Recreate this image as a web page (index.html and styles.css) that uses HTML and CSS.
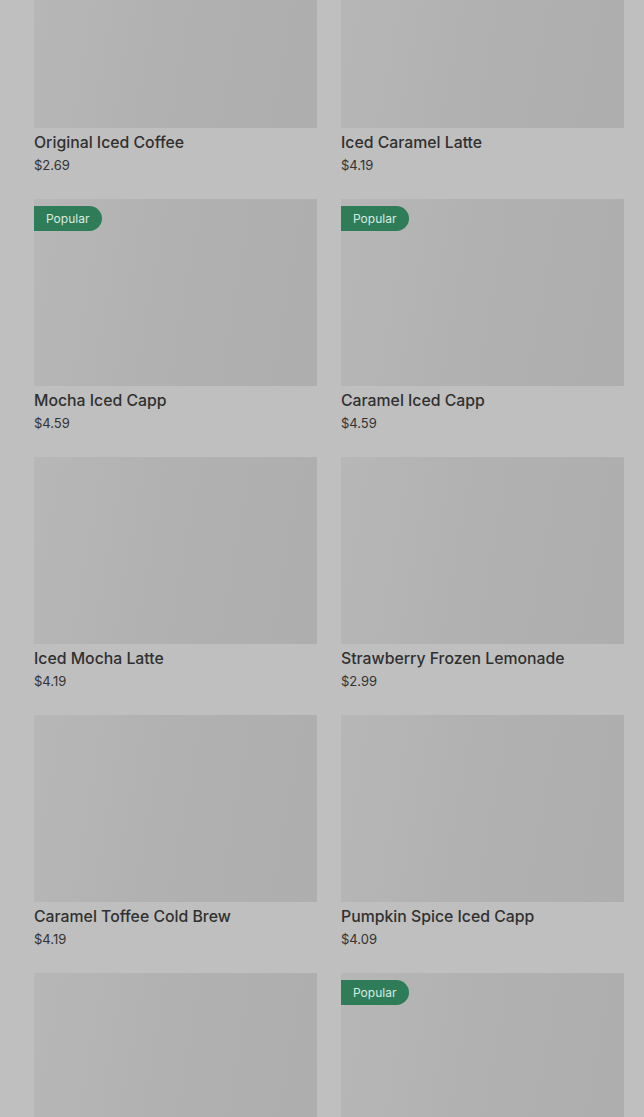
FILE: index.html
```html
<!DOCTYPE html>
<html lang="en">
<head>
  <meta charset="UTF-8">
  <meta name="viewport" content="width=device-width, initial-scale=1.0">
  <title>Menu - Cold Drinks</title>
  <link rel="stylesheet" href="styles.css">
</head>
<body>
  <!-- Product grid (page is dimmed behind an overlay) -->
  <div class="product-grid">
    <div class="product-card">
      <div class="product-image"></div>
      <div class="product-name">Original Iced Coffee</div>
      <div class="product-price">$2.69</div>
    </div>
    <div class="product-card">
      <div class="product-image"></div>
      <div class="product-name">Iced Caramel Latte</div>
      <div class="product-price">$4.19</div>
    </div>

    <div class="product-card">
      <div class="product-image"><span class="badge">Popular</span></div>
      <div class="product-name">Mocha Iced Capp</div>
      <div class="product-price">$4.59</div>
    </div>
    <div class="product-card">
      <div class="product-image"><span class="badge">Popular</span></div>
      <div class="product-name">Caramel Iced Capp</div>
      <div class="product-price">$4.59</div>
    </div>

    <div class="product-card">
      <div class="product-image"></div>
      <div class="product-name">Iced Mocha Latte</div>
      <div class="product-price">$4.19</div>
    </div>
    <div class="product-card">
      <div class="product-image"></div>
      <div class="product-name">Strawberry Frozen Lemonade</div>
      <div class="product-price">$2.99</div>
    </div>

    <div class="product-card">
      <div class="product-image"></div>
      <div class="product-name">Caramel Toffee Cold Brew</div>
      <div class="product-price">$4.19</div>
    </div>
    <div class="product-card">
      <div class="product-image"></div>
      <div class="product-name">Pumpkin Spice Iced Capp</div>
      <div class="product-price">$4.09</div>
    </div>

    <!-- last row runs past the bottom of the viewport -->
    <div class="product-card">
      <div class="product-image"></div>
    </div>
    <div class="product-card">
      <div class="product-image"><span class="badge">Popular</span></div>
    </div>
  </div>
</body>
</html>
```

FILE: styles.css
```css
/* Page (already dimmed by the overlay) */
body {
  margin: 0;
  padding: 0;
  background-color: #bfbfbf;
  font-family: Inter, "Noto Sans", sans-serif;
  color: #333;
  overflow: hidden;
}

/* Two column grid of drinks */
.product-grid {
  display: grid;
  grid-template-columns: 283px 283px;
  column-gap: 24px;
  row-gap: 24px;
  padding: 0 20px 0 34px;
  margin-top: -59px;
}

.product-image {
  position: relative;
  height: 187px;
  background: linear-gradient(100deg, #b7b7b7 0%, #b1b1b1 45%, #aeaeae 100%);
}

.badge {
  position: absolute;
  top: 7px;
  left: 0;
  height: 25px;
  line-height: 25px;
  padding: 0 13px 0 12px;
  background-color: #2f7d58;
  color: #d9ebe1;
  font-size: 12px;
  border-radius: 0 13px 13px 0;
}

.product-name {
  margin-top: 4px;
  font-size: 15.8px;
  font-weight: 500;
  line-height: 21px;
  color: #303030;
}

.product-price {
  padding-top: 2px;
  font-size: 13px;
  line-height: 20px;
  color: #333;
}
```
